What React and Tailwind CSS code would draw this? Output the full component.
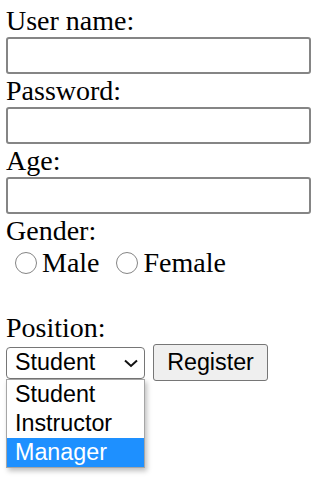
import { useState } from "react";

const positions = ["Student", "Instructor", "Manager"];

function FieldLabel({ children }) {
  return <label className="block h-[33px] leading-[33px] text-[28px] text-black">{children}</label>;
}

function TextBox({ type = "text" }) {
  return (
    <input
      type={type}
      className="block h-[37px] w-[305px] rounded-[3px] border-2 border-[#858585] bg-white px-1 text-[23px] outline-none"
    />
  );
}

export default function App() {
  const [position] = useState("Student");

  return (
    <div className="min-h-screen bg-white px-[6px] pt-[4px] font-['Liberation_Serif',serif] text-black">
      {/* Account fields */}
      <FieldLabel>User name:</FieldLabel>
      <TextBox />
      <FieldLabel>Password:</FieldLabel>
      <TextBox type="password" />
      <FieldLabel>Age:</FieldLabel>
      <TextBox />

      {/* Gender */}
      <FieldLabel>Gender:</FieldLabel>
      <div className="flex h-[31px] items-center text-[28px] leading-[31px]">
        <span className="ml-[9px] h-[22px] w-[22px] rounded-full border-[1.5px] border-[#858585] bg-white"></span>
        <span className="ml-[5px]">Male</span>
        <span className="ml-[16px] h-[22px] w-[22px] rounded-full border-[1.5px] border-[#858585] bg-white"></span>
        <span className="ml-[6px]">Female</span>
      </div>
      <div className="h-[33px]"></div>

      {/* Position */}
      <FieldLabel>Position:</FieldLabel>
      <div className="flex h-[37px] items-center gap-[8px] font-['Liberation_Sans',Arial,sans-serif] text-[23.3px]">
        <div className="relative">
          <div className="flex h-[32px] w-[139px] items-center justify-between rounded-[4px] border-[1.5px] border-[#767676] bg-white pl-[8px] pr-[6px] leading-none">
            <span>{position}</span>
            <svg width="14" height="10" viewBox="0 0 14 10" fill="none">
              <path d="M1 2.5 L7 8 L13 2.5" stroke="#111" strokeWidth="2" />
            </svg>
          </div>

          {/* Open list */}
          <ul className="absolute left-0 top-full w-[139px] border border-[#a6a6a6] bg-white shadow-[2px_3px_5px_rgba(0,0,0,0.25)]">
            {positions.map((p) => (
              <li
                key={p}
                className={
                  p === "Manager"
                    ? "h-[29px] bg-[#1e90ff] pl-[8px] leading-[29px] text-white"
                    : "h-[29px] pl-[8px] leading-[29px] text-black"
                }
              >
                {p}
              </li>
            ))}
          </ul>
        </div>
        <button className="h-[37px] w-[115px] rounded-[3px] border-[1.5px] border-[#767676] bg-[#efefef] leading-none text-black">
          Register
        </button>
      </div>
    </div>
  );
}
